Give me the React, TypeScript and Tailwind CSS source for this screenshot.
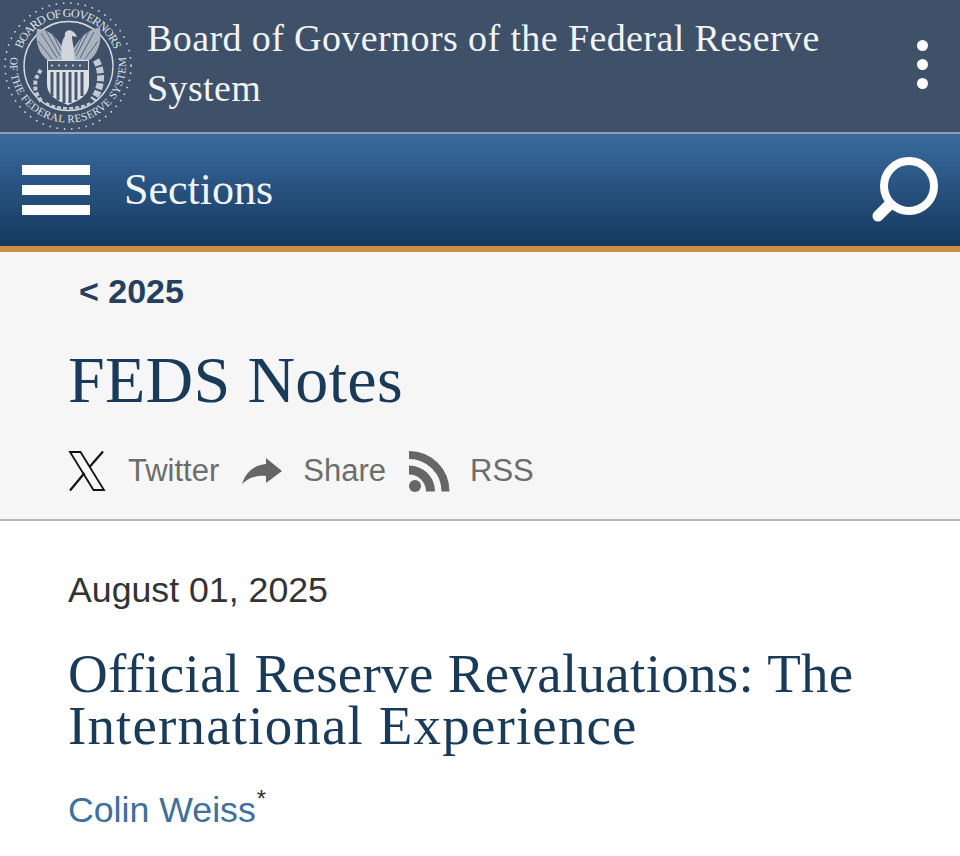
const serif = "font-['Liberation_Serif',serif]";
const sans = "font-['Liberation_Sans',Arial,sans-serif]";

const Seal = () => (
  <svg viewBox="0 0 140 132" className="w-[140px] h-[132px] shrink-0" fill="none">
    <defs>
      <path id="topArc" d="M22 49 A49 49 0 0 1 114 49" />
      <path id="botArc" d="M10.5 57 A58 58 0 1 0 125.5 57" />
    </defs>
    <circle cx="68" cy="66" r="63" stroke="#d5dbe2" strokeWidth="1.7" strokeDasharray="0.1 7.2" strokeLinecap="round" />
    <circle cx="68.5" cy="66" r="44.5" stroke="#d4d9df" strokeWidth="1.4" />
    <text fontSize="12" fill="#dfe3e8" fontFamily="Liberation Serif, serif">
      <textPath href="#topArc" textLength="120" lengthAdjust="spacing">BOARD OF GOVERNORS</textPath>
    </text>
    <text fontSize="11" fill="#dfe3e8" fontFamily="Liberation Serif, serif">
      <textPath href="#botArc" textLength="197" lengthAdjust="spacing">OF THE FEDERAL RESERVE SYSTEM</textPath>
    </text>
    {/* wings */}
    <path d="M63 48 C56 36 47 28 37 29 C35 42 39 55 49 61 L62 60Z" fill="#a9b3bf" />
    <path d="M74 48 C81 36 90 28 100 28 C102 42 98 55 88 61 L75 60Z" fill="#a9b3bf" />
    <path d="M41 33 L57 58 M46 31 L60 56 M52 33 L62 52 M38 41 L52 59 M94 32 L80 58 M89 31 L76 56 M84 33 L75 52 M98 41 L85 59" stroke="#56677e" strokeWidth="1" />
    {/* head and body */}
    <path d="M62 60 C60 48 62 40 65 36 C64 32 68 29 72 31 C74 32 76 34 77 37 L72 36 C72 42 75 50 75 60Z" fill="#cfd5dc" />
    {/* shield */}
    <path d="M47 60 H89 V84 C89 96 78 101 68 105 C58 101 47 96 47 84Z" fill="#dde1e6" />
    <path d="M48 61 H88 V70 H48Z" fill="#47586f" />
    <path d="M52 72 V96 M58 72 V100 M64 72 V103 M70 72 V103 M76 72 V100 M82 72 V96" stroke="#47586f" strokeWidth="3" />
    <path d="M52 65.5h0M59 65.5h0M66 65.5h0M73 65.5h0M80 65.5h0" stroke="#dde1e6" strokeWidth="2" strokeLinecap="round" />
    {/* branches */}
    <path d="M41 70 C33 80 33 92 42 102" stroke="#c3cad3" strokeWidth="4" strokeDasharray="4 2" />
    <path d="M96 60 C103 72 102 88 93 100" stroke="#c3cad3" strokeWidth="7" strokeDasharray="6 2" />
    <path d="M46 103 C56 110 80 110 90 103" stroke="#c3cad3" strokeWidth="2.5" strokeDasharray="4 2" />
  </svg>
);

const Dots = () => (
  <div className="flex flex-col gap-[8px] mr-[32px] mt-[-4px]">
    <span className="w-[11px] h-[11px] rounded-full bg-white" />
    <span className="w-[11px] h-[11px] rounded-full bg-white" />
    <span className="w-[11px] h-[11px] rounded-full bg-white" />
  </div>
);

const SearchIcon = () => (
  <svg viewBox="0 0 70 70" className="w-[70px] h-[70px]" fill="none">
    <circle cx="39" cy="31" r="25" stroke="#fff" strokeWidth="8" />
    <path d="M19 50 L8 61" stroke="#fff" strokeWidth="11" strokeLinecap="round" />
  </svg>
);

const XIcon = () => (
  <svg viewBox="0 0 38 42" className="w-[38px] h-[42px]" fill="none">
    <path d="M2 2 H12.5 L36 40 H25.5Z" stroke="#111" strokeWidth="1.8" />
    <path d="M35 1.5 L21.5 17 M16.5 23 L2 40.5" stroke="#111" strokeWidth="2.2" />
  </svg>
);

const ShareIcon = () => (
  <svg viewBox="0 0 41 27" className="w-[41px] h-[27px]">
    <path d="M0 26 C4 13 13 7 24 6 V0 L40 13 L24 25 V18 C14 17 6 20 0 26Z" fill="#666" />
  </svg>
);

const RssIcon = () => (
  <svg viewBox="0 0 41 41" className="w-[41px] h-[41px]" fill="none">
    <circle cx="6" cy="35" r="6" fill="#666" />
    <path d="M0 19 A21.5 21.5 0 0 1 21.5 40.5" stroke="#666" strokeWidth="9" />
    <path d="M0 4 A36.5 36.5 0 0 1 36.5 40.5" stroke="#666" strokeWidth="8" />
  </svg>
);

export default function App() {
  return (
    <div className="w-[960px] h-[856px] overflow-hidden bg-white">
      <header className="h-[134px] bg-[#3f5069] border-b-2 border-[#8fa0b5] flex items-center">
        <Seal />
        <div className={`${serif} flex-1 pl-[7px] text-[38px] leading-[50px] tracking-[0.4px] text-[#f2f4f6] mt-[-6px]`}>
          Board of Governors of the Federal Reserve System
        </div>
        <Dots />
      </header>

      <nav className="h-[112px] bg-gradient-to-b from-[#3a6b9f] to-[#15395f] flex items-center pl-[22px] pr-[20px]">
        <div className="flex flex-col gap-[10px] w-[68px]">
          <span className="h-[10px] bg-white" />
          <span className="h-[10px] bg-white" />
          <span className="h-[10px] bg-white" />
        </div>
        <span className={`${serif} ml-[34px] flex-1 text-[44px] text-[#f2f5f8]`}>Sections</span>
        <SearchIcon />
      </nav>
      <div className="h-[6px] bg-[#c98f45]" />

      <section className="h-[269px] bg-[#f6f6f6] border-b-2 border-[#b8b8b8] pl-[68px] pt-[19px]">
        <div className={`${sans} pl-[11px] text-[34px] leading-[40px] font-bold text-[#24405e]`}>&lt; 2025</div>
        <h1 className={`${serif} mt-[34px] text-[66px] leading-[70px] tracking-[0.3px] text-[#1a3a5a]`}>FEDS Notes</h1>
        <div className={`${sans} mt-[34px] flex items-center text-[31px] leading-[42px] text-[#6d6d6d]`}>
          <XIcon />
          <span className="ml-[22px]">Twitter</span>
          <span className="ml-[23px] mt-[2px]"><ShareIcon /></span>
          <span className="ml-[20px]">Share</span>
          <span className="ml-[23px] mt-[2px]"><RssIcon /></span>
          <span className="ml-[20px]">RSS</span>
        </div>
      </section>

      <main className="pl-[68px] pt-[49px]">
        <div className={`${sans} text-[35.7px] leading-[40px] text-[#333]`}>August 01, 2025</div>
        <h2 className={`${serif} mt-[38px] text-[55px] leading-[52px] tracking-[0.3px] text-[#1a3a5a]`}>
          Official Reserve Revaluations: The
          <br />
          <span className="tracking-[1.15px]">International Experience</span>
        </h2>
        <div className={`${sans} mt-[38px] text-[35.7px] leading-[40px] text-[#3f6f9f]`}>
          Colin Weiss<sup className="text-[24px] text-[#333] ml-[1px] top-[-15px]">*</sup>
        </div>
      </main>
    </div>
  );
}
